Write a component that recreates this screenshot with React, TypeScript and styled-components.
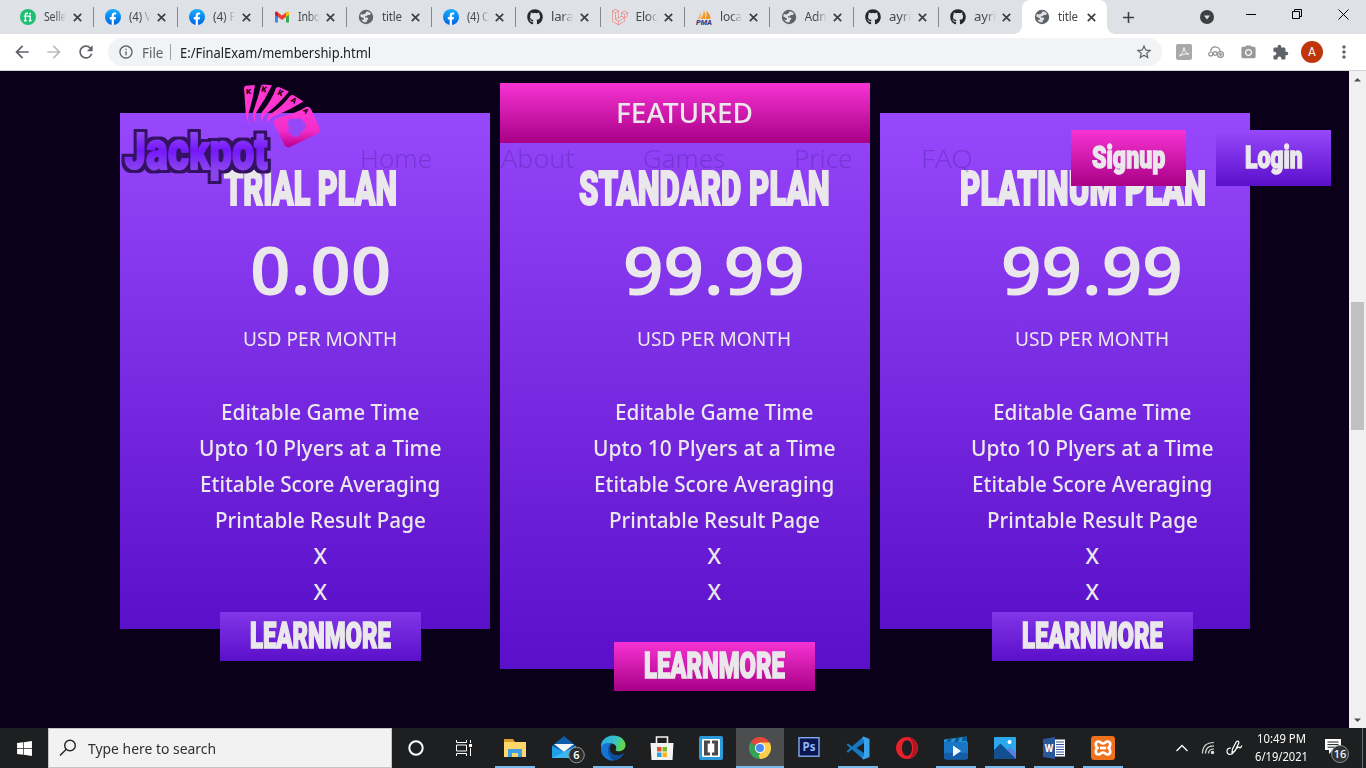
import React, { useLayoutEffect, useRef, useState } from "react";
import styled, { createGlobalStyle, css } from "styled-components";
import { FaGithub, FaWindows } from "react-icons/fa";
import { SiLaravel } from "react-icons/si";
import {
  MdArrowBack, MdArrowForward, MdRefresh, MdInfoOutline, MdStarBorder,
  MdCameraAlt, MdExtension, MdMoreVert, MdAdd,
} from "react-icons/md";

const ui = '"Noto Sans", "Open Sans", sans-serif';
const display = 'Roboto, "Liberation Sans", sans-serif';
const pink = "linear-gradient(#f733d3, #a80086)";
const purple = "linear-gradient(#9848fc, #5a0fc9)";
const ink = "#ebe8ec";

const Global = createGlobalStyle`
  * { box-sizing: border-box; }
  body { margin: 0; width: 1366px; height: 768px; overflow: hidden; background: #0a001a; font-family: ${ui}; }
  svg { display: block; flex: none; }
  ul { list-style: none; margin: 0; padding: 0; }
  h2, p { margin: 0; font-weight: inherit; }
`;

/* Condenses a line of text horizontally so that it takes the given width. */
const FitBox = styled.span`
  display: inline-block;
  flex: none;
  text-align: left;
  white-space: nowrap;
`;
const FitInner = styled.span`
  display: inline-block;
  transform-origin: 0 50%;
`;
function Fit({ width, children }: { width: number; children: React.ReactNode }) {
  const ref = useRef<HTMLSpanElement>(null);
  const [scale, setScale] = useState(1);
  useLayoutEffect(() => {
    if (ref.current) setScale(width / ref.current.offsetWidth);
  }, [width]);
  return (
    <FitBox style={{ width }}>
      <FitInner ref={ref} style={{ transform: `scaleX(${scale})` }}>{children}</FitInner>
    </FitBox>
  );
}

const Screen = styled.div`
  display: flex;
  flex-direction: column;
  width: 1366px;
  height: 768px;
  overflow: hidden;
`;

/* ---------- browser ---------- */
const TabStrip = styled.div`
  display: flex;
  flex: none;
  height: 34px;
  padding-left: 8px;
  background: #dee1e6;
`;
const TabBox = styled.div<{ $active?: boolean; $line?: boolean }>`
  position: relative;
  display: flex;
  align-items: center;
  width: 84.5px;
  height: 34px;
  padding-left: 12px;
  color: #45494d;
  font-size: 12px;
  ${(p) => p.$active && css`
    background: #fff;
    border-radius: 8px 8px 0 0;
    &::before, &::after {
      content: "";
      position: absolute;
      bottom: 0;
      width: 8px;
      height: 8px;
    }
    &::before { left: -8px; background: radial-gradient(circle at 0 0, transparent 7.5px, #fff 8px); }
    &::after { right: -8px; background: radial-gradient(circle at 100% 0, transparent 7.5px, #fff 8px); }
  `}
  ${(p) => p.$line && css`
    &::after {
      content: "";
      position: absolute;
      right: -1px;
      top: 7px;
      width: 1px;
      height: 20px;
      background: #85888d;
    }
  `}
`;
const TabLabel = styled.span<{ $fade: boolean }>`
  width: 22px;
  margin-left: 8px;
  overflow: hidden;
  white-space: nowrap;
  line-height: 18px;
  letter-spacing: -0.2px;
  ${(p) => p.$fade && css`mask-image: linear-gradient(90deg, #000 50%, transparent);`}
`;
const TabCloseSlot = styled.span`
  margin-left: 6.5px;
`;
const NewTab = styled.div`
  display: flex;
  align-items: center;
  justify-content: center;
  width: 44px;
  color: #3c4043;
`;
const WindowButtons = styled.div`
  display: flex;
  margin-left: auto;
`;
const WindowButton = styled.div<{ $w?: number; $h?: number }>`
  display: flex;
  align-items: center;
  justify-content: center;
  width: ${(p) => p.$w ?? 46}px;
  height: ${(p) => p.$h ?? 28}px;
`;
const Toolbar = styled.div`
  display: flex;
  flex: none;
  align-items: center;
  height: 37px;
  padding: 0 6px;
  background: #fff;
  border-bottom: 1px solid #d5d6d8;
`;
const ToolSlot = styled.div<{ $color?: string }>`
  display: flex;
  align-items: center;
  justify-content: center;
  width: 32px;
  color: ${(p) => p.$color ?? "#5f6368"};
`;
const Omnibox = styled.div`
  display: flex;
  flex: 1;
  align-items: center;
  height: 28px;
  margin: 0 6px;
  padding: 0 10px;
  border-radius: 14px;
  background: #f1f3f4;
  font-size: 14px;
  color: #202124;
`;
const Scheme = styled.span`
  display: flex;
  margin: 0 7px 0 8px;
  color: #5f6368;
`;
const OmniLine = styled.span`
  width: 1px;
  height: 16px;
  margin-right: 9px;
  background: #9a9da1;
`;
const StarSlot = styled.span`
  margin-left: auto;
  margin-right: -1px;
  color: #5f6368;
`;
const Avatar = styled.div`
  width: 22px;
  height: 22px;
  border-radius: 50%;
  background: #bf360c;
  color: #fff;
  font: 12px/22px Roboto, sans-serif;
  text-align: center;
`;

/* ---------- page ---------- */
const Viewport = styled.div`
  display: flex;
  flex: none;
  height: 657px;
  background: #0a001a;
`;
const Page = styled.main`
  position: relative;
  width: 1349px;
  padding: 12px 0 0 120px;
`;
const ScrollBar = styled.div`
  display: flex;
  flex-direction: column;
  align-items: center;
  width: 17px;
  padding: 6px 0 5px;
  background: #f1f1f1;
`;
const ScrollThumb = styled.div`
  width: 13px;
  height: 128px;
  margin-top: 220px;
  margin-bottom: auto;
  background: #c1c1c1;
`;
const SiteHeader = styled.header`
  position: absolute;
  top: 12px;
  left: 120px;
  right: 18px;
  display: flex;
  align-items: flex-start;
`;
const Nav = styled.nav`
  display: flex;
  gap: 69px;
  margin: 55px 0 0 40px;
  font-size: 26.5px;
  font-weight: 300;
  line-height: 40px;
  color: rgba(68, 34, 150, 0.34);
`;
const HeaderButtons = styled.div`
  display: flex;
  gap: 30px;
  margin: 47px 0 0 auto;
`;
const HeaderButton = styled.div<{ $bg: string }>`
  display: flex;
  justify-content: center;
  width: 115px;
  height: 56px;
  background: ${(p) => p.$bg};
  color: ${ink};
  font-family: ${display};
  font-weight: 900;
  font-size: 32px;
  line-height: 55px;
  -webkit-text-stroke: 1.4px ${ink};
`;
const Plans = styled.section`
  display: flex;
  align-items: flex-start;
  gap: 10px;
`;
const Plan = styled.article<{ $featured?: boolean }>`
  width: 370px;
  height: ${(p) => (p.$featured ? 586 : 516)}px;
  margin-top: ${(p) => (p.$featured ? 0 : 30)}px;
  background: ${purple};
  color: ${ink};
`;
const Ribbon = styled.div`
  height: 60px;
  padding-right: 2px;
  background: ${pink};
  font-size: 27px;
  font-weight: 500;
  line-height: 59px;
  text-align: center;
`;
const PlanBody = styled.div<{ $shift: number; $top: number }>`
  display: flex;
  flex-direction: column;
  align-items: center;
  padding: ${(p) => p.$top}px 0 0 ${(p) => p.$shift}px;
`;
const PlanTitle = styled.h2`
  padding-right: 19px;
  font-family: ${display};
  font-weight: 900;
  font-size: 49px;
  line-height: 61px;
  height: 60px;
  -webkit-text-stroke: 2px ${ink};
`;
const Price = styled.p`
  margin-top: 11px;
  font-size: 67px;
  font-weight: 650;
  line-height: 80px;
`;
const Period = styled.p`
  margin-top: 15px;
  font-size: 19.5px;
  line-height: 30px;
`;
const Features = styled.ul`
  margin-top: 39px;
  font-size: 22px;
  font-weight: 500;
  line-height: 36px;
  text-align: center;
  li { height: 36px; }
`;
const LearnMore = styled.div<{ $featured?: boolean }>`
  display: flex;
  justify-content: center;
  width: 201px;
  height: 49px;
  margin-top: ${(p) => (p.$featured ? 33 : 3)}px;
  background: ${(p) => (p.$featured ? pink : "linear-gradient(#8236e8, #5a0fc9)")};
  font-family: ${display};
  font-weight: 900;
  font-size: 37px;
  line-height: 48px;
  -webkit-text-stroke: 1.6px ${ink};
`;

/* ---------- taskbar ---------- */
const Taskbar = styled.footer`
  display: flex;
  flex: none;
  height: 40px;
  background: #1d1f20;
  color: #fff;
`;
const TaskSlot = styled.div<{ $w?: number; $active?: boolean; $open?: boolean }>`
  position: relative;
  display: flex;
  align-items: center;
  justify-content: center;
  width: ${(p) => p.$w ?? 48}px;
  height: 40px;
  background: ${(p) => (p.$active ? "#4c4d4e" : "transparent")};
  ${(p) => (p.$active || p.$open) && css`
    &::after {
      content: "";
      position: absolute;
      bottom: 0;
      left: ${p.$active ? 0 : 4}px;
      right: ${p.$active ? 0 : 4}px;
      height: 2px;
      background: #76b9ed;
    }
  `}
`;
const SearchBox = styled.div`
  display: flex;
  align-items: center;
  width: 344px;
  height: 40px;
  padding-left: 10px;
  gap: 11px;
  border: 1px solid #c4c4c4;
  background: #f2f2f2;
  color: #303030;
  font-size: 15px;
`;
const Apps = styled.div`
  display: flex;
  gap: 1px;
  margin-left: 3px;
`;
const Tray = styled.div`
  display: flex;
  align-items: center;
  margin-left: auto;
  height: 40px;
`;
const Clock = styled.div`
  display: flex;
  flex-direction: column;
  align-items: center;
  width: 68px;
  margin-right: 9px;
  font-size: 12px;
  line-height: 18px;
`;
const Notice = styled.div`
  width: 38px;
`;
const ShowDesktop = styled.div`
  width: 4px;
  height: 40px;
  border-left: 1px solid #6c6d6e;
`;

/* ---------- drawings ---------- */
const CloseIcon = () => (
  <svg width="9" height="9" viewBox="0 0 9 9"><path d="M0.8 0.8L8.2 8.2M8.2 0.8L0.8 8.2" stroke="#3c4043" strokeWidth="1.7" /></svg>
);
const Fiverr = () => (
  <svg width="16" height="16" viewBox="0 0 16 16">
    <circle cx="8" cy="8" r="8" fill="#1dbf73" />
    <path d="M8 4.2H6.9Q5.4 4.2 5.4 5.7V12M3.8 7.1H10.2V12M3.9 11.7H6.6M8.9 11.7H11.5" fill="none" stroke="#fff" strokeWidth="1.4" />
    <circle cx="10.1" cy="4.8" r="1" fill="#fff" />
  </svg>
);
const Facebook = () => (
  <svg width="16" height="16" viewBox="0 0 16 16">
    <defs>
      <linearGradient id="fb" x1="0" y1="0" x2="0" y2="1"><stop stopColor="#19afff" /><stop offset="1" stopColor="#0062e0" /></linearGradient>
    </defs>
    <circle cx="8" cy="8" r="8" fill="url(#fb)" />
    <path d="M6.7 16V10.4H4.8V8.1H6.7V6.5Q6.7 3.5 9.6 3.5H11.1V5.5H10Q8.9 5.5 8.9 6.7V8.1H11L10.6 10.4H8.9V16Z" fill="#fff" />
  </svg>
);
const Gmail = () => (
  <svg width="16" height="16" viewBox="0 0 16 16">
    <path d="M1 4V13.5H4V6Z" fill="#4285f4" />
    <path d="M12 6V13.5H15V4Z" fill="#34a853" />
    <path d="M1 3.5Q1.5 2 3 2.6L4 3.5V8L1 5.7Z" fill="#c5221f" />
    <path d="M4 3.5L8 6.5L12 3.5V8L8 11L4 8Z" fill="#ea4335" />
    <path d="M12 3.5L13 2.6Q14.7 2 15 3.5V5.7L12 8Z" fill="#fbbc04" />
  </svg>
);
const PhpMyAdmin = () => (
  <svg width="16" height="16" viewBox="0 0 16 16">
    <path d="M0.7 10Q4 7 4.2 2.5Q5.4 6 4.6 9.4Z" fill="#f7b267" />
    <path d="M4.5 9.8Q8 6 7.8 1Q10.3 6 8.8 10Z" fill="#f8972a" />
    <path d="M9.5 10Q11.5 6 10.3 2Q14.6 5 14.5 10Z" fill="#f49322" />
    <text x="0" y="15.6" fontSize="6.3" fontWeight="800" fontStyle="italic" fontFamily="Roboto, sans-serif" fill="#3d3c78" textLength="16" lengthAdjust="spacingAndGlyphs">PMA</text>
  </svg>
);
const Globe = () => (
  <svg width="16" height="16" viewBox="0 0 16 16">
    <circle cx="8" cy="8" r="7.2" fill="#5f6368" />
    <path d="M8.8 2.2Q11.5 2.4 13 4.6L11.8 6H9.6L8.8 7.3H6.9V8.6H9.4L10.5 10L9 11.2L8.3 13.6Q4.5 13.4 3.2 10.8L5.5 10.9L6 9.6L2.3 7.4Q2.3 6 3 5L5 5.6L7.3 4.4Z" fill="#dfe1e5" />
  </svg>
);
const Github = () => <FaGithub size={16} color="#24292e" />;

const Logo = () => (
  <svg width="200" height="100" viewBox="0 0 200 100" overflow="visible">
    <defs>
      <linearGradient id="card" x1="0" y1="0" x2="0" y2="1"><stop stopColor="#ff38d8" /><stop offset=".6" stopColor="#f22cc8" /><stop offset="1" stopColor="#b80090" /></linearGradient>
      <linearGradient id="word" x1="0" y1="0" x2="0" y2="1"><stop offset=".2" stopColor="#9148f5" /><stop offset=".5" stopColor="#7518fb" /><stop offset=".8" stopColor="#8a43ee" /></linearGradient>
      <filter id="rim" x="-10%" y="-20%" width="120%" height="140%" colorInterpolationFilters="sRGB">
        <feMorphology in="SourceAlpha" operator="dilate" radius="3" result="fat" />
        <feFlood floodColor="#341262" />
        <feComposite in2="fat" operator="in" result="edge" />
        <feMerge><feMergeNode in="edge" /><feMergeNode in="SourceGraphic" /></feMerge>
      </filter>
    </defs>
    <g fill="#ff35d0">
      <path d="M124 5Q124 3 126 2.8L135 2Q133 16 129 29Q126.5 36 130 42Q125.5 37 125.6 28Z" />
      <path d="M141 3Q142 1.3 144 1.6L152 2.3Q145 17 136.5 29Q133.5 35 137 41Q132 37 133 29Q138 15 141 3Z" />
      <path d="M156 5Q157.5 3.5 159.5 4.2L169 8.5Q158 22 146 31Q142 34 142 40Q139.5 35 142 29Q152 17 156 5Z" />
      <path d="M170 13Q172 11.5 174 12.5L183.5 18.5Q170 27 155 33Q149 35 148 40Q146 36 149 32Q163 23 170 13Z" />
    </g>
    <path d="M157 35Q177 30 186 24Q189.5 23 191.5 27L199.5 45Q200.5 49 197 51L170 64Q166 65 164 61L154 41Q152.7 37 157 35Z" fill="url(#card)" />
    <path d="M171 35.500Q177 36.500 181 35Q182 38 185.500 40.500Q186.500 46 182 48.500Q179 54 174.500 54Q170 53 171 49.500L168 50.500L169 48L166.500 48.500L170 45Q166.500 42 168 38.500Q169 36 171 35.500Z" fill="#9648f7" />
    <g fontFamily="Roboto, sans-serif" fontWeight="900" fill="#12020f" textAnchor="middle">
      <text x="128.5" y="10.5" fontSize="8">K</text>
      <text x="144" y="9" fontSize="8" transform="rotate(12 144 7)">K</text>
      <text x="160.5" y="12.5" fontSize="8" transform="rotate(25 160.5 9.5)">K</text>
      <text x="174" y="20" fontSize="7.5" transform="rotate(35 174 17)">A</text>
      <text x="185.5" y="30" fontSize="7" transform="rotate(50 185.5 28)">A</text>
    </g>
    <text
      x="4.5" y="86" fontFamily="Roboto, sans-serif" fontWeight="900" fill="url(#word)" stroke="url(#word)"
      strokeWidth="1.8" strokeLinejoin="round" filter="url(#rim)" textLength="143" lengthAdjust="spacingAndGlyphs"
    >
      <tspan fontSize="50">J</tspan><tspan fontSize="54">ac</tspan><tspan fontSize="49">k</tspan><tspan fontSize="52">po</tspan><tspan fontSize="51">t</tspan>
    </text>
  </svg>
);

const ExplorerIcon = () => (
  <svg width="24" height="24" viewBox="0 0 24 24">
    <path d="M1 3H10L12 6H22V10H1Z" fill="#d9a22b" />
    <path d="M1 6H23V21H1Z" fill="#ffd768" />
    <path d="M5 13H19V21H15V17H9V21H5Z" fill="#3f9fe6" />
  </svg>
);
const MailIcon = () => (
  <svg width="36" height="30" viewBox="0 0 36 30" overflow="visible">
    <path d="M6 13L18 3L30 13V22H6Z" fill="#0f5cab" />
    <path d="M8 11H28L18 19Z" fill="#f4f7fa" />
    <path d="M6 13L18 19L30 13V25H6Z" fill="#1f9fe8" />
    <path d="M6 25L30 13V25Z" fill="#3ab8f4" />
    <circle cx="30.5" cy="22" r="7.8" fill="#2b2d2f" stroke="#929495" />
    <text x="30.5" y="26" textAnchor="middle" fontSize="11" fontWeight="600" fontFamily="Noto Sans, sans-serif" fill="#fff">6</text>
  </svg>
);
const EdgeIcon = () => (
  <svg width="26" height="26" viewBox="0 0 24 24">
    <defs>
      <linearGradient id="edge" x1="0" y1="0" x2="1" y2=".3"><stop stopColor="#2aa9e8" /><stop offset=".6" stopColor="#35c1c6" /><stop offset="1" stopColor="#62d84e" /></linearGradient>
    </defs>
    <path d="M1 12C0 5 6 0.5 12 0.5C19 0.5 24 5 23.5 10C23 14 19 15.5 16 15Q13.5 14.5 15 12.5C15.5 9 12 7.5 9 8C5 8.5 2 11 1 12Z" fill="url(#edge)" />
    <path d="M1 12C2 7.5 7 6.5 11 8C8 9.5 8 14 10.5 16.5C14 20 19 19 22 17C19 22.5 13 24.5 8 23C3 21 0.5 17 1 12Z" fill="#1673d1" />
    <path d="M10 8C6 11 7 20 12 23.3C16 23.5 20 21 22 17C19 19 14 20 10.5 16.5C8 14 8 10 11 8Z" fill="#0d4f9c" />
  </svg>
);
const StoreIcon = () => (
  <svg width="24" height="26" viewBox="0 0 24 26">
    <path d="M6.5 8V2H17.5V8" fill="none" stroke="#f3f3f3" strokeWidth="1.6" />
    <path d="M0.5 8H23.5L22.5 25H1.5Z" fill="#f3f3f3" />
    <path d="M7 12H11.5V16.5H7Z" fill="#e4512b" /><path d="M12.5 12H17V16.5H12.5Z" fill="#7db928" />
    <path d="M7 17.5H11.5V22H7Z" fill="#24a2e6" /><path d="M12.5 17.5H17V22H12.5Z" fill="#f8b71b" />
  </svg>
);
const BracketsIcon = () => (
  <svg width="24" height="24" viewBox="0 0 24 24">
    <rect width="24" height="24" rx="2" fill="#2a9bd8" />
    <rect x="3" y="3" width="18" height="18" rx="1" fill="#fff" />
    <path d="M11 4.5H5V19.5H11V16.5H8.7V7.5H11ZM13 4.5H19V19.5H13V16.5H15.3V7.5H13Z" fill="#494a4c" />
  </svg>
);
const ChromeIcon = () => (
  <svg width="22" height="22" viewBox="0 0 24 24">
    <path d="M12 12L1.6 6A12 12 0 0 1 22.4 6Z" fill="#e24b3c" />
    <path d="M12 12L22.4 6A12 12 0 0 1 12 24Z" fill="#fdd04a" />
    <path d="M12 12V24A12 12 0 0 1 1.6 6Z" fill="#35a356" />
    <path d="M12 6H22.4L17 14Z" fill="#fdd04a" />
    <path d="M1.6 6L7 15L12 18L9 23Z" fill="#35a356" /><path d="M17 15L12 24L10.5 20Z" fill="#fdd04a" />
    <circle cx="12" cy="12" r="5.6" fill="#f5f5f5" /><circle cx="12" cy="12" r="4.4" fill="#4a8af4" />
  </svg>
);
const PhotoshopIcon = () => (
  <svg width="22" height="22" viewBox="0 0 22 22">
    <rect x="1" y="0.7" width="20" height="18.5" fill="#0b1550" stroke="#83a9f3" strokeWidth="1.4" />
    <text x="11" y="14" textAnchor="middle" fontSize="11.5" fontWeight="700" fontFamily="Noto Sans, sans-serif" fill="#8eb8fa">Ps</text>
  </svg>
);
const VsCodeIcon = () => (
  <svg width="24" height="24" viewBox="0 0 24 24">
    <path d="M17.5 0.5L6 10.5L2 7.5L0.5 8.5L4 12L0.5 15.5L2 16.7L6 13.6L17.5 23.5L18 17L10.5 12L18 7Z" fill="#1479bf" />
    <path d="M17.5 0.5L23.5 3V21L17.5 23.5L16.5 22.5L18 18V6L16.5 1.5Z" fill="#36a5ec" />
  </svg>
);
const OperaIcon = () => (
  <svg width="24" height="24" viewBox="0 0 24 24">
    <path fillRule="evenodd" d="M12 1A11 11 0 1 0 12 23A11 11 0 1 0 12 1ZM12 4.2C15 4.2 17 7.5 17 12S15 19.8 12 19.8S7 16.5 7 12S9 4.2 12 4.2Z" fill="#e8202c" />
    <path d="M14 1.3A11 11 0 0 1 14 22.7C17 20 18.5 16 18.5 12S17 4 14 1.3Z" fill="#a91520" />
  </svg>
);
const MoviesIcon = () => (
  <svg width="24" height="24" viewBox="0 0 24 24">
    <path d="M0 3.5L23 0.5V7H0Z" fill="#2196d8" />
    <path d="M4 3L8 2.5L6 7H2ZM12 2L16 1.5L14 6H10ZM19 1L23 0.5V5H17.5Z" fill="#0d5b96" />
    <path d="M0 6H24V21Q24 23.5 21.5 23.5H2.5Q0 23.5 0 21Z" fill="#1976c4" />
    <path d="M0 17H24V21Q24 23.5 21.5 23.5H2.5Q0 23.5 0 21Z" fill="#155da8" />
    <path d="M9 9.5L17 15L9 20.5Z" fill="#f5f9fc" />
  </svg>
);
const PhotosIcon = () => (
  <svg width="22" height="22" viewBox="0 0 22 22">
    <rect width="22" height="22" rx="1" fill="#2aa9ee" />
    <path d="M11 15L16 10L22 16V22H11Z" fill="#5b7fe0" />
    <path d="M0 13L6.5 6.5L22 22H0Z" fill="#124f8f" />
    <circle cx="15.5" cy="5" r="2" fill="#fff" />
  </svg>
);
const WordIcon = () => (
  <svg width="24" height="24" viewBox="0 0 24 24">
    <path d="M12 3.5H23V20.5H12Z" fill="#fff" />
    <path d="M14 6H22M14 8.5H22M14 11H22M14 13.5H22M14 16H22M14 18.5H22" stroke="#2b579a" strokeWidth="1.1" />
    <path d="M1 3L13 1V23L1 21Z" fill="#2b579a" />
    <text x="7" y="16.3" textAnchor="middle" fontSize="11" fontWeight="800" fontFamily="Noto Sans, sans-serif" fill="#fff" textLength="8.5" lengthAdjust="spacingAndGlyphs">W</text>
  </svg>
);
const XamppIcon = () => (
  <svg width="24" height="24" viewBox="0 0 24 24">
    <rect width="24" height="24" rx="3" fill="#f0701b" />
    <path
      d="M7.5 5.5C4 5.5 4 10 6.5 11.8C4 14 4 18.5 7.5 18.5C9.5 18.5 10 16.5 12 16.5S14.5 18.5 16.5 18.5C20 18.5 20 14 17.5 11.8C20 10 20 5.5 16.5 5.5C14.5 5.5 14 7.5 12 7.5S9.5 5.5 7.5 5.5Z"
      fill="none" stroke="#fff" strokeWidth="2.7"
    />
    <path d="M9 12H15" stroke="#fff" strokeWidth="2.8" />
  </svg>
);
const NoticeIcon = () => (
  <svg width="32" height="30" viewBox="0 0 32 30">
    <path d="M1 6H17V17H9L5 21V17H1Z" fill="#fff" />
    <path d="M3.5 9H14.5M3.5 11.6H14.5M3.5 14.2H11" stroke="#1d1f20" strokeWidth="1" />
    <circle cx="16" cy="21" r="8.5" fill="#303233" stroke="#8c8e90" />
    <text x="16" y="25" textAnchor="middle" fontSize="11" fontWeight="500" fontFamily="Noto Sans, sans-serif" fill="#fff">16</text>
  </svg>
);

/* ---------- data ---------- */
const tabs: { icon: React.ReactNode; label: string }[] = [
  { icon: <Fiverr />, label: "Selle" },
  { icon: <Facebook />, label: "(4) V" },
  { icon: <Facebook />, label: "(4) F" },
  { icon: <Gmail />, label: "Inbo" },
  { icon: <Globe />, label: "title" },
  { icon: <Facebook />, label: "(4) C" },
  { icon: <Github />, label: "lara" },
  { icon: <SiLaravel size={16} color="#f4645f" />, label: "Eloc" },
  { icon: <PhpMyAdmin />, label: "loca" },
  { icon: <Globe />, label: "Adn" },
  { icon: <Github />, label: "ayri" },
  { icon: <Github />, label: "ayri" },
  { icon: <Globe />, label: "title" },
];
const links: [string, number][] = [["Home", 72], ["About", 73], ["Games", 82], ["Price", 58], ["FAQ", 52]];
const features: [string, number][] = [
  ["Editable Game Time", 198], ["Upto 10 Plyers at a Time", 242],
  ["Etitable Score Averaging", 240], ["Printable Result Page", 211], ["X", 13], ["X", 13],
];
const plans = [
  { name: "TRIAL PLAN", nameW: 173, price: "0.00", priceW: 141, shift: 30, featured: false },
  { name: "STANDARD PLAN", nameW: 251, price: "99.99", priceW: 182, shift: 58, featured: true },
  { name: "PLATINUM PLAN", nameW: 246, price: "99.99", priceW: 182, shift: 54, featured: false },
];
const apps: { icon: React.ReactNode; open?: boolean; active?: boolean }[] = [
  { icon: <ExplorerIcon />, open: true },
  { icon: <MailIcon /> },
  { icon: <EdgeIcon />, open: true },
  { icon: <StoreIcon /> },
  { icon: <BracketsIcon /> },
  { icon: <ChromeIcon />, active: true },
  { icon: <PhotoshopIcon /> },
  { icon: <VsCodeIcon />, open: true },
  { icon: <OperaIcon /> },
  { icon: <MoviesIcon />, open: true },
  { icon: <PhotosIcon />, open: true },
  { icon: <WordIcon />, open: true },
  { icon: <XamppIcon />, open: true },
];

function Browser() {
  return (
    <>
      <TabStrip>
        {tabs.map((t, i) => (
          <TabBox key={i} $active={i === 12} $line={i < 11}>
            {t.icon}
            <TabLabel $fade={t.label !== "title"}>
              {t.label === "title" ? <Fit width={20}>title</Fit> : <Fit width={22}>{t.label}</Fit>}
            </TabLabel>
            <TabCloseSlot><CloseIcon /></TabCloseSlot>
          </TabBox>
        ))}
        <NewTab><MdAdd size={19} /></NewTab>
        <WindowButtons>
          <WindowButton $w={42} $h={34}>
            <svg width="14" height="14" viewBox="0 0 14 14"><circle cx="7" cy="7" r="7" fill="#3c4043" /><path d="M4 5.5H10L7 9.5Z" fill="#dee1e6" /></svg>
          </WindowButton>
          <WindowButton><svg width="10" height="10"><path d="M0 5.5H10" stroke="#000" /></svg></WindowButton>
          <WindowButton>
            <svg width="10" height="10"><path d="M0.5 2.5H7.5V9.5H0.5ZM2.5 2.5V0.5H9.5V7.5H7.5" fill="none" stroke="#000" /></svg>
          </WindowButton>
          <WindowButton><svg width="11" height="11"><path d="M0.5 0.5L10.5 10.5M10.5 0.5L0.5 10.5" stroke="#000" /></svg></WindowButton>
        </WindowButtons>
      </TabStrip>
      <Toolbar>
        <ToolSlot><MdArrowBack size={20} /></ToolSlot>
        <ToolSlot $color="#babcbe"><MdArrowForward size={20} /></ToolSlot>
        <ToolSlot><MdRefresh size={20} /></ToolSlot>
        <Omnibox>
          <MdInfoOutline size={16} color="#5f6368" />
          <Scheme><Fit width={21}>File</Fit></Scheme>
          <OmniLine />
          <Fit width={191}>E:/FinalExam/membership.html</Fit>
          <StarSlot><MdStarBorder size={18} /></StarSlot>
        </Omnibox>
        <ToolSlot>
          <svg width="16" height="16" viewBox="0 0 16 16">
            <rect width="16" height="16" rx="2" fill="#a9a9a9" />
            <path d="M3.5 12Q7.5 9 8 3.5Q8.5 9 13 10Q8 9 3.5 12Z" fill="none" stroke="#f5f5f5" />
          </svg>
        </ToolSlot>
        <ToolSlot>
          <svg width="16" height="14" viewBox="0 0 16 14" fill="none" stroke="#8c8c8c" strokeWidth="1.2">
            <circle cx="2.8" cy="9" r="2" /><circle cx="7.3" cy="8.5" r="1.8" /><circle cx="12.5" cy="9.5" r="2.9" />
            <circle cx="12.5" cy="9.5" r="0.8" />
            <path d="M2.5 6.5Q3.5 1.5 8 2Q11.5 2.5 12 6" />
          </svg>
        </ToolSlot>
        <ToolSlot $color="#999"><MdCameraAlt size={17} /></ToolSlot>
        <ToolSlot><MdExtension size={17} /></ToolSlot>
        <ToolSlot><Avatar>A</Avatar></ToolSlot>
        <ToolSlot><MdMoreVert size={20} /></ToolSlot>
      </Toolbar>
    </>
  );
}

function Site() {
  return (
    <Viewport>
      <Page>
        <Plans>
          {plans.map((p) => (
            <Plan key={p.name} $featured={p.featured}>
              {p.featured && <Ribbon><Fit width={137}>FEATURED</Fit></Ribbon>}
              <PlanBody $shift={p.shift} $top={p.featured ? 15 : 45}>
                <PlanTitle><Fit width={p.nameW}>{p.name}</Fit></PlanTitle>
                <Price><Fit width={p.priceW}>{p.price}</Fit></Price>
                <Period><Fit width={154}>USD PER MONTH</Fit></Period>
                <Features>
                  {features.map(([text, w], i) => <li key={i}><Fit width={w}>{text}</Fit></li>)}
                </Features>
                <LearnMore $featured={p.featured}><Fit width={141}>LEARNMORE</Fit></LearnMore>
              </PlanBody>
            </Plan>
          ))}
        </Plans>
        <SiteHeader>
          <Logo />
          <Nav>{links.map(([text, w]) => <Fit key={text} width={w}>{text}</Fit>)}</Nav>
          <HeaderButtons>
            <HeaderButton $bg={pink}><Fit width={73}>Signup</Fit></HeaderButton>
            <HeaderButton $bg={purple}><Fit width={58}>Login</Fit></HeaderButton>
          </HeaderButtons>
        </SiteHeader>
      </Page>
      <ScrollBar>
        <svg width="7" height="5"><path d="M0 4.5L3.5 1L7 4.5Z" fill="#505050" /></svg>
        <ScrollThumb />
        <svg width="7" height="5"><path d="M0 0.5L3.5 4L7 0.5Z" fill="#505050" /></svg>
      </ScrollBar>
    </Viewport>
  );
}

export default function App() {
  return (
    <Screen>
      <Global />
      <Browser />
      <Site />
      <Taskbar>
        <TaskSlot><FaWindows size={17} /></TaskSlot>
        <SearchBox>
          <svg width="18" height="18" viewBox="0 0 18 18" fill="none" stroke="#222" strokeWidth="1.4">
            <circle cx="11" cy="6.5" r="5.3" /><path d="M7.3 10.3L1 16.5" />
          </svg>
          <Fit width={128}>Type here to search</Fit>
        </SearchBox>
        <TaskSlot>
          <svg width="16" height="16"><circle cx="8" cy="8" r="6.7" fill="none" stroke="#fff" strokeWidth="2" /></svg>
        </TaskSlot>
        <TaskSlot>
          <svg width="16" height="16" viewBox="0 0 16 16" fill="none" stroke="#fff">
            <path d="M0.5 0V2.5H10.5V0M0.5 5H10.5V11H0.5ZM0.5 16V13.5H10.5V16M14.5 0V3M14.5 8V16" />
            <path d="M13 4H16V7H13Z" fill="#fff" stroke="none" />
          </svg>
        </TaskSlot>
        <Apps>
          {apps.map((a, i) => <TaskSlot key={i} $open={a.open} $active={a.active}>{a.icon}</TaskSlot>)}
        </Apps>
        <Tray>
          <TaskSlot $w={26}>
            <svg width="12" height="8"><path d="M0.5 7L6 1.5L11.5 7" fill="none" stroke="#fff" strokeWidth="1.3" /></svg>
          </TaskSlot>
          <TaskSlot $w={26}>
            <svg width="14" height="14" viewBox="0 0 14 14" fill="none" stroke="#d8d8d8" strokeWidth="1.2">
              <path d="M1.5 12.5Q1.5 1.5 13 1.5M4.5 12.5Q4.5 4.8 13 4.8M7.5 12.5Q7.5 8 13 8" />
              <circle cx="11.5" cy="11.5" r="1.2" fill="#d8d8d8" />
            </svg>
          </TaskSlot>
          <TaskSlot $w={26}>
            <svg width="17" height="16" viewBox="0 0 17 16" fill="none" stroke="#fff" strokeWidth="1.2">
              <path d="M6 12.5L6.5 9L10.5 1.5Q13 0.5 12.8 3L9 11ZM5 8Q0.5 8 1 12Q2 15.5 6 14Q8 12.5 10 9Q13 6 13.5 7.5T16 5.5" />
            </svg>
          </TaskSlot>
          <Clock>
            <Fit width={49}>10:49 PM</Fit>
            <Fit width={53}>6/19/2021</Fit>
          </Clock>
          <Notice><NoticeIcon /></Notice>
          <ShowDesktop />
        </Tray>
      </Taskbar>
    </Screen>
  );
}
